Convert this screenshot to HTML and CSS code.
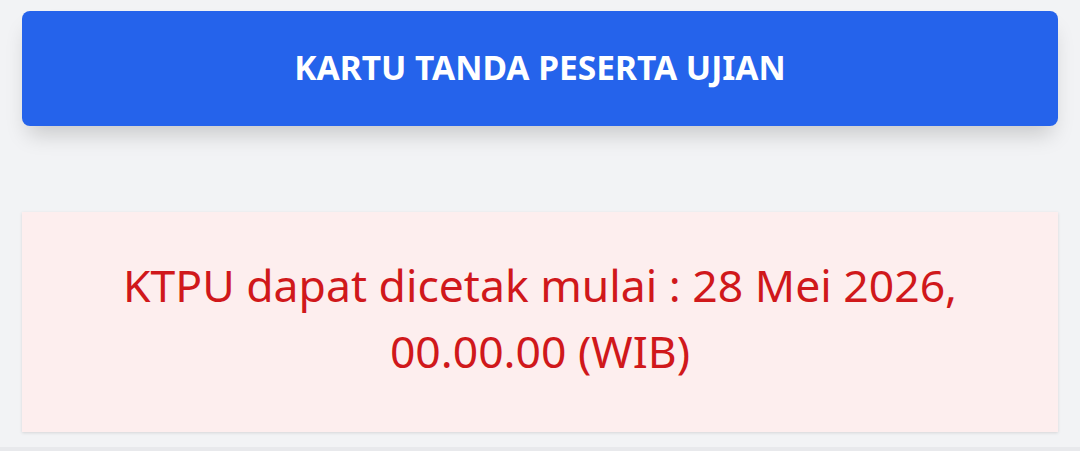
FILE: index.html
```html
<!DOCTYPE html>
<html lang="id">
<head>
<meta charset="utf-8">
<link rel="stylesheet" href="styles.css">
</head>
<body>
<div class="page">
  <button class="title-btn">KARTU TANDA PESERTA UJIAN</button>
  <div class="notice">
    <p class="notice-text">KTPU dapat dicetak mulai : 28 Mei 2026, 00.00.00 (WIB)</p>
  </div>
  <div class="next"></div>
</div>
</body>
</html>
```
FILE: styles.css
```css
html, body {
  margin: 0;
  padding: 0;
  background: #f2f3f5;
  font-family: "Noto Sans", "Open Sans", sans-serif;
}
.page {
  padding: 11px 22px 0 22px;
  display: flex;
  flex-direction: column;
}
.title-btn {
  box-sizing: border-box;
  height: 115px;
  padding: 0 0 4px 0;
  border: none;
  border-radius: 8px;
  background: #2563eb;
  color: #ffffff;
  font-family: "Noto Sans", sans-serif;
  font-weight: 700;
  font-size: 33.5px;
  letter-spacing: 0;
  box-shadow: 0 14px 22px -6px rgba(0,0,0,0.18);
  cursor: pointer;
}
.notice {
  box-sizing: border-box;
  margin-top: 86px;
  height: 220px;
  background: #fdeeee;
  box-shadow: 0 1px 3px rgba(0,0,0,0.12);
  display: flex;
  align-items: center;
  justify-content: center;
  padding: 0 60px 8px 60px;
}
.notice-text {
  margin: 0;
  text-align: center;
  color: #d0181b;
  font-size: 44.5px;
  line-height: 66px;
}
.next {
  margin-top: 15px;
  height: 20px;
  background: #e8e9ec;
  margin-left: -22px;
  margin-right: -22px;
}
```
